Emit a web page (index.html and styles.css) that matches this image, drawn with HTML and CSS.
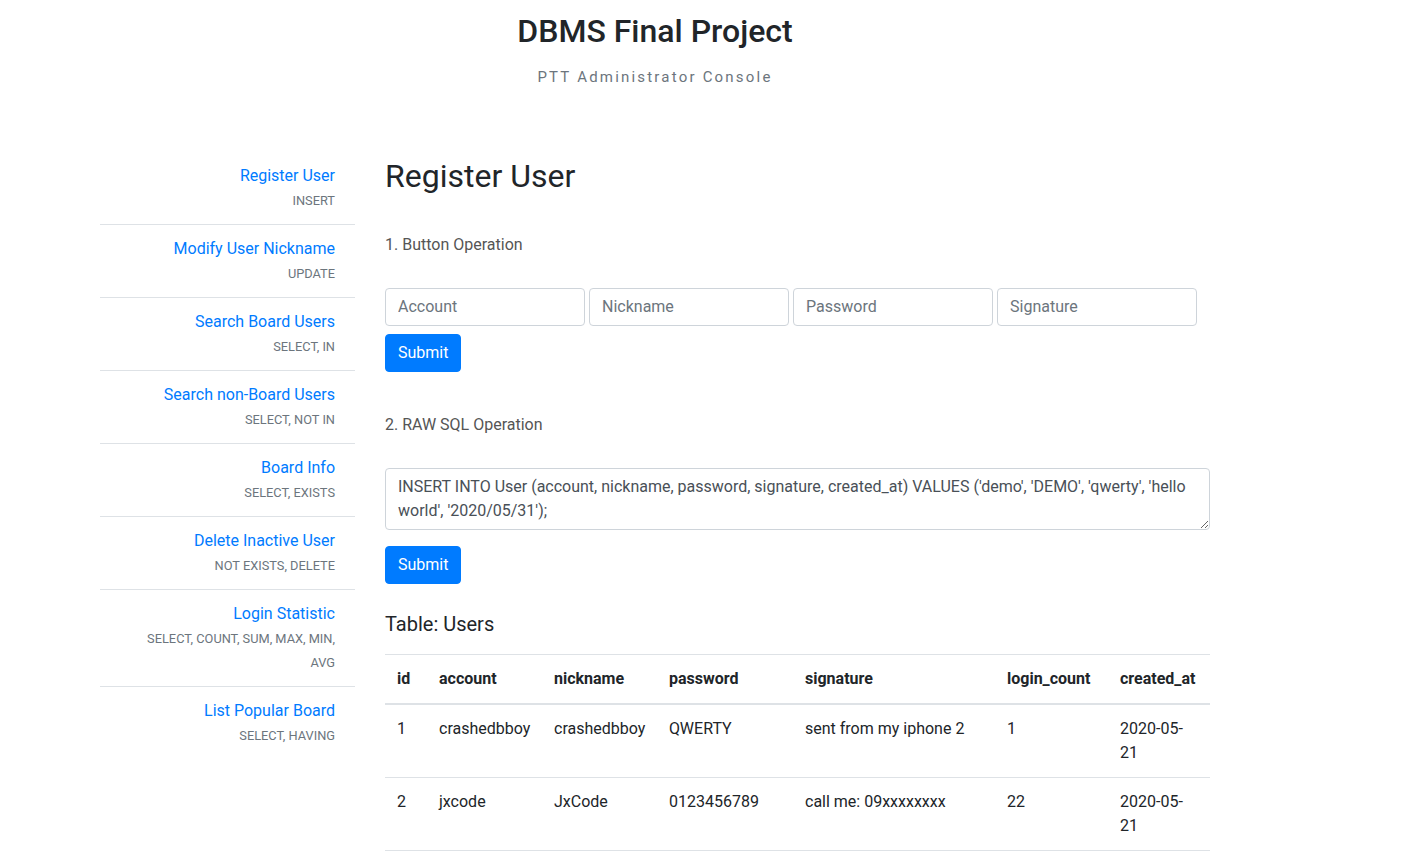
FILE: index.html
```html
<!DOCTYPE html>
<html lang="en">
<head>
<meta charset="utf-8">
<title>DBMS Final Project</title>
<link rel="stylesheet" href="styles.css">
</head>
<body>
<div class="page">
  <header class="masthead">
    <h1 class="masthead-title">DBMS Final Project</h1>
    <p class="masthead-sub">PTT Administrator Console</p>
  </header>

  <div class="layout">
    <nav class="sidebar">
      <ul class="nav-list">
        <li class="nav-item"><a class="nav-link" href="#">Register User</a><br><small class="nav-tag">INSERT</small></li>
        <li class="nav-item"><a class="nav-link" href="#">Modify User Nickname</a><br><small class="nav-tag">UPDATE</small></li>
        <li class="nav-item"><a class="nav-link" href="#">Search Board Users</a><br><small class="nav-tag">SELECT, IN</small></li>
        <li class="nav-item"><a class="nav-link" href="#">Search non-Board Users</a><br><small class="nav-tag">SELECT, NOT IN</small></li>
        <li class="nav-item"><a class="nav-link" href="#">Board Info</a><br><small class="nav-tag">SELECT, EXISTS</small></li>
        <li class="nav-item"><a class="nav-link" href="#">Delete Inactive User</a><br><small class="nav-tag">NOT EXISTS, DELETE</small></li>
        <li class="nav-item"><a class="nav-link" href="#">Login Statistic</a><br><small class="nav-tag">SELECT, COUNT, SUM, MAX, MIN, AVG</small></li>
        <li class="nav-item"><a class="nav-link" href="#">List Popular Board</a><br><small class="nav-tag">SELECT, HAVING</small></li>
      </ul>
    </nav>

    <main class="content">
      <h2 class="page-title">Register User</h2>

      <p class="section-label">1. Button Operation</p>
      <form class="op-form">
        <div class="input-row">
          <input class="field" type="text" placeholder="Account">
          <input class="field" type="text" placeholder="Nickname">
          <input class="field" type="text" placeholder="Password">
          <input class="field" type="text" placeholder="Signature">
        </div>
        <button class="btn" type="button">Submit</button>
      </form>

      <p class="section-label section-label-2">2. RAW SQL Operation</p>
      <form class="op-form sql-form">
        <textarea class="sql-box">INSERT INTO User (account, nickname, password, signature, created_at) VALUES ('demo', 'DEMO', 'qwerty', 'hello world', '2020/05/31');</textarea>
        <button class="btn" type="button">Submit</button>
      </form>

      <h5 class="table-title">Table: Users</h5>
      <table class="data-table">
        <colgroup>
          <col class="c-id"><col class="c-account"><col class="c-nick"><col class="c-pass"><col class="c-sig"><col class="c-login"><col class="c-created">
        </colgroup>
        <thead>
          <tr><th>id</th><th>account</th><th>nickname</th><th>password</th><th>signature</th><th>login_count</th><th>created_at</th></tr>
        </thead>
        <tbody>
          <tr><td>1</td><td>crashedbboy</td><td>crashedbboy</td><td>QWERTY</td><td>sent from my iphone 2</td><td>1</td><td>2020-05-21</td></tr>
          <tr><td>2</td><td>jxcode</td><td>JxCode</td><td>0123456789</td><td>call me: 09xxxxxxxx</td><td>22</td><td>2020-05-21</td></tr>
        </tbody>
      </table>
    </main>
  </div>
</div>
</body>
</html>
```

FILE: styles.css
```css
* { box-sizing: border-box; }

body {
  margin: 0;
  font-family: Roboto, "Liberation Sans", sans-serif;
  font-size: 16px;
  line-height: 1.5;
  color: #212529;
  background: #fff;
}

.page {
  width: 1110px;
  margin-left: 100px;
}

.masthead {
  text-align: center;
  padding-top: 12px;
}

.masthead-title {
  margin: 0;
  font-size: 32px;
  font-weight: 500;
  line-height: 1.2;
  color: #212529;
}

.masthead-sub {
  margin: 15px 0 0;
  font-size: 15px;
  letter-spacing: 2.2px;
  color: #6c757d;
  line-height: 24px;
}

.layout {
  display: flex;
  margin-top: 63px;
}

.sidebar {
  width: 255px;
  flex: none;
  margin-right: 30px;
}

.nav-list {
  list-style: none;
  margin: 0;
  padding: 0;
}

.nav-item {
  text-align: right;
  padding: 12px 20px 12px 26px;
  border-bottom: 1px solid #dee2e6;
}

.nav-item:last-child { border-bottom: none; }

.nav-link {
  color: #007bff;
  text-decoration: none;
}

.nav-tag {
  font-size: 12.8px;
  color: #6c757d;
}

.content {
  width: 825px;
  padding-top: 5px;
}

.page-title {
  margin: 0;
  font-size: 32px;
  font-weight: 400;
  line-height: 1.2;
}

.section-label {
  margin: 37px 0 0;
  color: #555;
}

.section-label-2 { margin-top: 41px; }

.op-form { margin-top: 31px; }

.input-row {
  display: flex;
  gap: 4px;
}

.field {
  width: 200px;
  height: 38px;
  padding: 6px 12px;
  border: 1px solid #ced4da;
  border-radius: 4px;
  font: inherit;
  color: #495057;
}

.field::placeholder { color: #6c757d; }

.btn {
  display: block;
  margin-top: 8px;
  height: 38px;
  padding: 6px 12px;
  border: 1px solid #007bff;
  border-radius: 4px;
  background: #007bff;
  color: #fff;
  font: inherit;
  line-height: 24px;
}

.sql-box {
  display: block;
  width: 825px;
  height: 62px;
  padding: 6px 12px;
  border: 1px solid #ced4da;
  border-radius: 4px;
  font: inherit;
  line-height: 24px;
  color: #495057;
  resize: vertical;
}

.sql-form .btn { margin-top: 16px; }

.table-title {
  margin: 28px 0 0;
  font-size: 20px;
  font-weight: 400;
  line-height: 1.2;
}

.data-table {
  margin-top: 18px;
  width: 825px;
  border-collapse: collapse;
  table-layout: fixed;
}

.c-id { width: 42px; }
.c-account { width: 115px; }
.c-nick { width: 115px; }
.c-pass { width: 136px; }
.c-sig { width: 202px; }
.c-login { width: 113px; }
.c-created { width: 102px; }

.data-table th,
.data-table td {
  padding: 12px;
  border-top: 1px solid #dee2e6;
  text-align: left;
  vertical-align: top;
}

.data-table th {
  font-weight: 700;
  border-bottom: 2px solid #dee2e6;
  white-space: nowrap;
}

.data-table tbody tr:last-child td { border-bottom: 1px solid #dee2e6; }
```
